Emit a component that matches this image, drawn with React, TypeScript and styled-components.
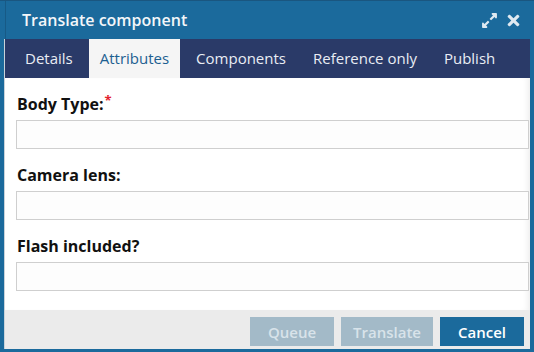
import React from "react";
import styled, {createGlobalStyle} from 'styled-components';
import {FaExpandAlt, FaTimes} from "react-icons/fa";

const GlobalStyle = createGlobalStyle`
  html, body {
    margin: 0;
    padding: 0;
  }
  body {
    font-family: "Open Sans", "Liberation Sans", sans-serif;
    overflow: hidden;
  }
`;

const tabs = ['Details', 'Attributes', 'Components', 'Reference only', 'Publish'];

const fields = [
  {label: 'Body Type:', required: true},
  {label: 'Camera lens:', required: false},
  {label: 'Flash included?', required: false},
];

export default function App() {
  return (
    <>
      <GlobalStyle/>
      <Window>
        <TitleBar>
          <Title>Translate component</Title>
          <TitleIcons>
            <IconButton><FaExpandAlt size={17}/></IconButton>
            <IconButton><FaTimes size={17}/></IconButton>
          </TitleIcons>
        </TitleBar>

        <Panel>
          <TabBar>
            {tabs.map((t) => (
              <Tab key={t} $active={t === 'Attributes'}>{t}</Tab>
            ))}
          </TabBar>

          <Content>
            {fields.map((f) => (
              <FieldBlock key={f.label}>
                <Label>
                  {f.label}
                  {f.required && <Required>*</Required>}
                </Label>
                <Input type="text"/>
              </FieldBlock>
            ))}
          </Content>

          <Footer>
            <Button disabled>Queue</Button>
            <Button disabled>Translate</Button>
            <Button $primary>Cancel</Button>
          </Footer>
        </Panel>
      </Window>
    </>
  )
}

const Window = styled.div`
  width: 534px;
  height: 352px;
  box-sizing: border-box;
  background: #1b6a9c;
  border-top: 1px solid #1a5680;
  padding: 0 4px 3px 5px;

  display: flex;
  flex-direction: column;
`;

const TitleBar = styled.div`
  flex: 0 0 38px;
  padding: 0 8px 0 17px;
  box-shadow: inset 1px 0 0 #175a86;

  display: flex;
  align-items: center;
  justify-content: space-between;
`;

const Title = styled.div`
  font-size: 16px;
  font-weight: 600;
  color: #f3f6f9;
  margin-top: -1px;
`;

const TitleIcons = styled.div`
  display: flex;
  align-items: center;
  gap: 7px;
`;

const IconButton = styled.span`
  color: #dfe9f1;
  display: flex;
  align-items: center;
`;

const Panel = styled.div`
  flex: 1 1 auto;
  background: #ffffff;
  box-shadow: -1px 0 0 #c9d3da;

  display: flex;
  flex-direction: column;
`;

const TabBar = styled.div`
  flex: 0 0 39px;
  background: #2a3a68;
  padding-left: 9px;

  display: flex;
  gap: 5px;
`;

const Tab = styled.div<{$active?: boolean}>`
  padding: 0 11px;
  line-height: 39px;
  font-size: 15px;
  color: ${({$active}) => $active ? '#1d5f91' : '#e9edf4'};
  background: ${({$active}) => $active ? '#f5f5f5' : 'transparent'};
`;

const Content = styled.div`
  flex: 1 1 auto;
  padding: 16px 1px 0 11px;
  box-shadow: inset -6px 0 6px -4px rgba(0, 0, 0, 0.08);
`;

const FieldBlock = styled.div`
  margin-bottom: 16px;
`;

const Label = styled.label`
  display: block;
  height: 20px;
  line-height: 20px;
  margin: 0 0 6px 1px;
  font-size: 16px;
  font-weight: 700;
  color: #111111;
`;

const Required = styled.span`
  color: #e3212d;
  font-size: 13px;
  position: relative;
  top: -5px;
  margin-left: 1px;
`;

const Input = styled.input`
  display: block;
  width: 513px;
  height: 29px;
  box-sizing: border-box;
  border: 1px solid #cfcfcf;
  background: #fdfdfd;
  margin: 0;
  padding: 0 6px;
`;

const Footer = styled.div`
  flex: 0 0 39px;
  box-sizing: border-box;
  background: #ebebeb;
  padding: 7px 6px 0 0;

  display: flex;
  justify-content: flex-end;
  align-items: flex-start;
  gap: 7px;
`;

const Button = styled.button<{$primary?: boolean}>`
  height: 29px;
  min-width: 84px;
  padding: 0 12px;
  border: none;
  font-family: "Open Sans", "Liberation Sans", sans-serif;
  font-size: 15px;
  font-weight: 600;
  color: ${({$primary}) => $primary ? '#ffffff' : '#d8e3ea'};
  background: ${({$primary}) => $primary ? '#1b6a9c' : '#a3bac8'};
`;
